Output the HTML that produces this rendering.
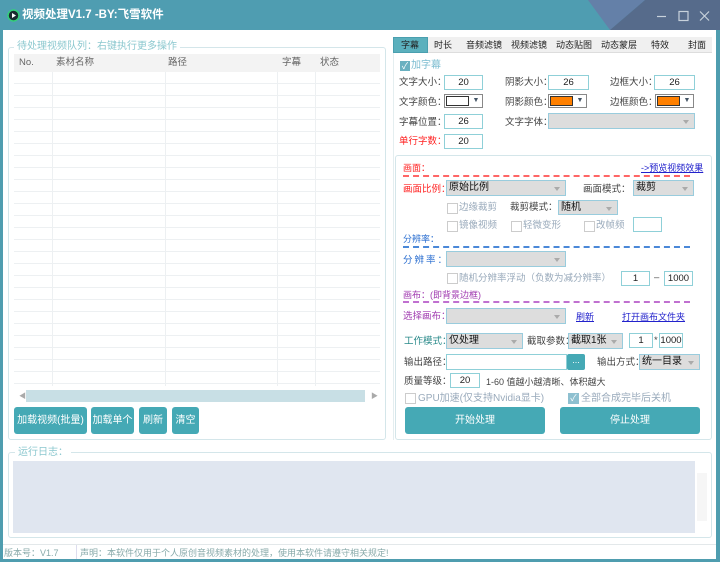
<!DOCTYPE html>
<html><head><meta charset="utf-8"><style>
*{margin:0;padding:0;box-sizing:border-box}
body{width:720px;height:562px;position:relative;overflow:hidden;background:#4f9daf;font-family:"Liberation Sans","Noto Sans CJK SC",sans-serif;font-size:9.5px;line-height:12px;color:#444}
.a{position:absolute;white-space:nowrap}
.in{position:absolute;background:#fff;border:1px solid #8fd0d8;text-align:center;font-size:9.5px;line-height:13px;color:#222}
.cb{position:absolute;background:#ddd;border:1px solid #9cd;font-size:10px;line-height:14px;padding-left:2px;color:#111;white-space:nowrap}
.cb::after{content:"";position:absolute;right:5px;top:6px;border:3px solid transparent;border-top:4px solid #aaa}
.chk{position:absolute;width:11px;height:11px;border:1px solid #ccc;background:#fff}
.btn{position:absolute;background:#45a9b5;color:#fff;border-radius:3px;text-align:center;font-size:10px;white-space:nowrap}
.g{color:#9ab}
</style></head><body>
<div class="a" style="left:0;top:0;width:720px;height:30px;background:#4f9db1"></div>
<svg class="a" style="left:560px;top:0" width="160" height="30"><polygon points="28,0 85,0 50,30" fill="#6480a8"/><polygon points="85,0 160,0 160,30 50,30" fill="#566b8b"/></svg>
<svg class="a" style="left:7px;top:9px" width="13" height="13"><circle cx="6.5" cy="6.5" r="5.5" fill="#1a2a30" stroke="#34d07a" stroke-width="1.5"/><polygon points="5,4 9,6.5 5,9" fill="#fff"/></svg>
<div class="a" style="left:22px;top:8px;color:#fff;font-weight:bold;font-size:11.5px;line-height:14px">视频处理V1.7 -BY:飞雪软件</div>
<svg class="a" style="left:655px;top:10px" width="60" height="12" stroke="#c8d2dc" stroke-width="1.2" fill="none"><path d="M2 6.5H11"/><rect x="24" y="1.5" width="9" height="9"/><path d="M45 1.5L54 10.5M54 1.5L45 10.5"/></svg>
<div class="a" style="left:3px;top:30px;width:713px;height:529px;background:#fff"></div>
<!-- left group -->
<div class="a" style="left:8px;top:47px;width:378px;height:393px;border:1px solid #d4e6ea;border-radius:3px"></div>
<div class="a" style="left:14px;top:41px;background:#fff;padding:0 3px;color:#8cc8cf;font-size:10px">待处理视频队列：右键执行更多操作</div>
<div class="a" style="left:14px;top:54px;width:366px;height:18px;background:#f3f3f3"></div>
<div class="a" style="left:19px;top:57px;color:#666">No.</div>
<div class="a" style="left:56px;top:57px;color:#666">素材名称</div>
<div class="a" style="left:168px;top:57px;color:#666">路径</div>
<div class="a" style="left:282px;top:57px;color:#666">字幕</div>
<div class="a" style="left:320px;top:57px;color:#666">状态</div>
<div class="a" style="left:14px;top:72px;width:366px;height:314px;background:repeating-linear-gradient(#fff 0 11px,#edf0f2 11px 12px)"></div>
<div class="a" style="left:52px;top:72px;width:1px;height:314px;background:#edf0f2"></div>
<div class="a" style="left:165px;top:72px;width:1px;height:314px;background:#edf0f2"></div>
<div class="a" style="left:277px;top:72px;width:1px;height:314px;background:#edf0f2"></div>
<div class="a" style="left:315px;top:72px;width:1px;height:314px;background:#edf0f2"></div>
<div class="a" style="left:19px;top:391px;color:#aaa;font-size:7px">◀</div>
<div class="a" style="left:26px;top:390px;width:339px;height:12px;background:#c8dfe5"></div>
<div class="a" style="left:371px;top:391px;color:#aaa;font-size:7px">▶</div>
<div class="btn" style="left:14px;top:407px;width:73px;height:27px;line-height:27px">加载视频(批量)</div>
<div class="btn" style="left:91px;top:407px;width:43px;height:27px;line-height:27px">加载单个</div>
<div class="btn" style="left:139px;top:407px;width:28px;height:27px;line-height:27px">刷新</div>
<div class="btn" style="left:172px;top:407px;width:27px;height:27px;line-height:27px">清空</div>
<!-- log -->
<div class="a" style="left:8px;top:452px;width:704px;height:86px;border:1px solid #d4e6ea;border-radius:3px"></div>
<div class="a" style="left:15px;top:447px;background:#fff;padding:0 3px;color:#8cc8cf;font-size:10px">运行日志：</div>
<div class="a" style="left:13px;top:461px;width:682px;height:72px;background:#e0e6f0"></div>
<div class="a" style="left:697px;top:473px;width:10px;height:48px;background:#f6f6f6"></div>
<!-- status -->
<div class="a" style="left:3px;top:544px;width:713px;height:1px;background:#e3e8ea"></div>
<div class="a" style="left:4px;top:547px;color:#8aa;font-size:9px">版本号：V1.7</div>
<div class="a" style="left:76px;top:545px;width:1px;height:14px;background:#dde"></div>
<div class="a" style="left:80px;top:547px;color:#8aa;font-size:9px">声明：本软件仅用于个人原创音视频素材的处理，使用本软件请遵守相关规定!</div>
<!-- tabs -->
<div class="a" style="left:393px;top:37px;width:319px;height:16px;background:#f0f0f0;border-bottom:1px solid #ddd"></div>
<div class="a" style="left:393px;top:37px;width:35px;height:16px;background:#5bb0bd;border:1px solid #4a9faf"></div>
<div class="a" style="left:393px;top:39px;width:319px;height:12px;font-size:9px;color:#222">
<span class="a" style="left:8px">字幕</span><span class="a" style="left:41px">时长</span><span class="a" style="left:73px">音频滤镜</span><span class="a" style="left:118px">视频滤镜</span><span class="a" style="left:163px">动态贴图</span><span class="a" style="left:208px">动态蒙层</span><span class="a" style="left:258px">特效</span><span class="a" style="left:295px">封面</span></div>
<div class="a" style="left:393px;top:53px;width:1px;height:387px;background:#e4eef0"></div>
<!-- subtitle panel -->
<div class="a" style="left:400px;top:61px;width:10px;height:10px;background:#6ab0c0;color:#fff;font-size:9px;line-height:10px;text-align:center">✓</div>
<div class="a" style="left:411px;top:60px;color:#7bbcd0;font-size:10px">加字幕</div>
<div class="a" style="left:399px;top:77px">文字大小：</div><div class="in" style="left:444px;top:75px;width:39px;height:15px">20</div>
<div class="a" style="left:505px;top:77px">阴影大小：</div><div class="in" style="left:548px;top:75px;width:41px;height:15px">26</div>
<div class="a" style="left:610px;top:77px">边框大小：</div><div class="in" style="left:654px;top:75px;width:41px;height:15px">26</div>
<div class="a" style="left:399px;top:97px">文字颜色：</div>
<div class="a" style="left:444px;top:94px;width:39px;height:14px;border:1px solid #888;background:#fff"><div class="a" style="left:1px;top:1px;width:23px;height:10px;border:1px solid #333"></div><div class="a" style="right:0;top:0;width:12px;height:12px;font-size:7px;color:#456;text-align:center">▼</div></div>
<div class="a" style="left:505px;top:97px">阴影颜色：</div>
<div class="a" style="left:548px;top:94px;width:39px;height:14px;border:1px solid #888;background:#fff"><div class="a" style="left:1px;top:1px;width:23px;height:10px;border:1px solid #333;background:#ff8000"></div><div class="a" style="right:0;top:0;width:12px;height:12px;font-size:7px;color:#456;text-align:center">▼</div></div>
<div class="a" style="left:610px;top:97px">边框颜色：</div>
<div class="a" style="left:655px;top:94px;width:39px;height:14px;border:1px solid #888;background:#fff"><div class="a" style="left:1px;top:1px;width:23px;height:10px;border:1px solid #333;background:#ff8000"></div><div class="a" style="right:0;top:0;width:12px;height:12px;font-size:7px;color:#456;text-align:center">▼</div></div>
<div class="a" style="left:399px;top:117px">字幕位置：</div><div class="in" style="left:444px;top:114px;width:39px;height:15px">26</div>
<div class="a" style="left:505px;top:117px">文字字体：</div><div class="cb" style="left:548px;top:113px;width:147px;height:16px"></div>
<div class="a" style="left:399px;top:136px;color:#f22">单行字数：</div><div class="in" style="left:444px;top:134px;width:39px;height:15px">20</div>
<!-- second panel -->
<div class="a" style="left:395px;top:155px;width:317px;height:285px;border:1px solid #d4e6ea;border-radius:3px"></div>
<div class="a" style="left:403px;top:162px;color:#f22;font-size:9px">画面：</div>
<div class="a" style="left:641px;top:162px;color:#22c;font-size:9px;text-decoration:underline">-&gt;预览视频效果</div>
<div class="a" style="left:403px;top:175px;width:287px;border-top:2px dashed #f66"></div>
<div class="a" style="left:403px;top:184px;color:#f22">画面比例：</div><div class="cb" style="left:446px;top:180px;width:120px;height:16px">原始比例</div>
<div class="a" style="left:583px;top:184px">画面模式：</div><div class="cb" style="left:633px;top:180px;width:61px;height:16px">裁剪</div>
<div class="chk" style="left:447px;top:203px"></div><div class="a g" style="left:459px;top:202px">边缘裁剪</div>
<div class="a" style="left:510px;top:202px">裁剪模式：</div><div class="cb" style="left:558px;top:200px;width:60px;height:15px">随机</div>
<div class="chk" style="left:447px;top:221px"></div><div class="a g" style="left:459px;top:220px">镜像视频</div>
<div class="chk" style="left:511px;top:221px"></div><div class="a g" style="left:523px;top:220px">轻微变形</div>
<div class="chk" style="left:584px;top:221px"></div><div class="a g" style="left:596px;top:220px">改帧频</div>
<div class="in" style="left:633px;top:217px;width:29px;height:15px"></div>
<div class="a" style="left:403px;top:233px;color:#2a6ed0;font-size:9px">分辨率：</div>
<div class="a" style="left:403px;top:246px;width:287px;border-top:2px dashed #4a88d8"></div>
<div class="a" style="left:403px;top:255px;color:#2a6ed0;letter-spacing:2px">分辨率：</div><div class="cb" style="left:446px;top:251px;width:120px;height:16px"></div>
<div class="chk" style="left:447px;top:273px"></div><div class="a g" style="left:459px;top:273px">随机分辨率浮动（负数为减分辨率）</div>
<div class="in" style="left:621px;top:271px;width:29px;height:15px">1</div><div class="a" style="left:654px;top:272px">–</div>
<div class="in" style="left:664px;top:271px;width:29px;height:15px">1000</div>
<div class="a" style="left:403px;top:289px;color:#a03ab0;font-size:9px">画布：(即背景边框)</div>
<div class="a" style="left:403px;top:301px;width:287px;border-top:2px dashed #c070d0"></div>
<div class="a" style="left:403px;top:311px;color:#a03ab0">选择画布：</div><div class="cb" style="left:446px;top:308px;width:120px;height:16px"></div>
<div class="a" style="left:576px;top:311px;color:#22c;font-size:9px;text-decoration:underline">刷新</div>
<div class="a" style="left:622px;top:311px;color:#22c;font-size:9px;text-decoration:underline">打开画布文件夹</div>
<div class="a" style="left:404px;top:336px;color:#2a8a8a">工作模式：</div><div class="cb" style="left:446px;top:333px;width:77px;height:16px">仅处理</div>
<div class="a" style="left:527px;top:336px">截取参数：</div><div class="cb" style="left:568px;top:333px;width:55px;height:16px">截取1张</div>
<div class="in" style="left:629px;top:333px;width:24px;height:15px">1</div><div class="a" style="left:654px;top:335px">*</div>
<div class="in" style="left:659px;top:333px;width:24px;height:15px">1000</div>
<div class="a" style="left:404px;top:357px">输出路径：</div>
<div class="in" style="left:446px;top:354px;width:121px;height:16px"></div>
<div class="a" style="left:567px;top:354px;width:18px;height:16px;background:#45a9b5;color:#fff;text-align:center;font-size:9px;border-radius:2px">...</div>
<div class="a" style="left:597px;top:357px">输出方式：</div><div class="cb" style="left:639px;top:354px;width:61px;height:16px">统一目录</div>
<div class="a" style="left:404px;top:376px">质量等级：</div><div class="in" style="left:450px;top:373px;width:30px;height:15px">20</div>
<div class="a" style="left:486px;top:376px;font-size:9px">1-60 值越小越清晰、体积越大</div>
<div class="chk" style="left:405px;top:393px"></div><div class="a g" style="left:418px;top:393px;font-size:10px">GPU加速(仅支持Nvidia显卡)</div>
<div class="a" style="left:568px;top:393px;width:11px;height:11px;background:#8ec0d0;color:#fff;font-size:9px;line-height:11px;text-align:center">✓</div><div class="a g" style="left:581px;top:393px;font-size:10px">全部合成完毕后关机</div>
<div class="btn" style="left:405px;top:407px;width:140px;height:27px;line-height:27px">开始处理</div>
<div class="btn" style="left:560px;top:407px;width:140px;height:27px;line-height:27px">停止处理</div>
</body></html>
